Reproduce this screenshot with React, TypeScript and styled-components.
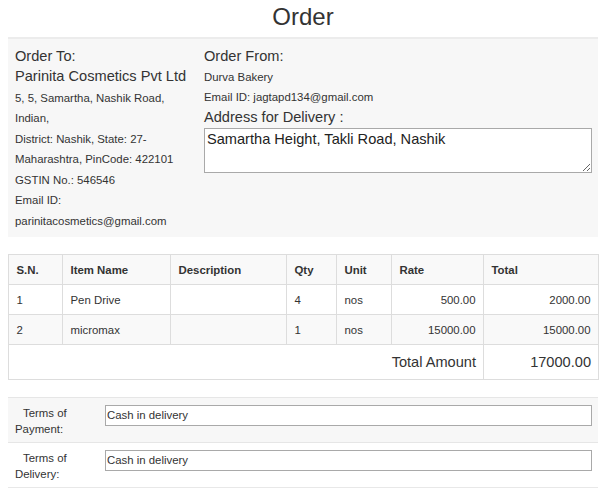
import React from "react";
import styled, { createGlobalStyle } from "styled-components";

const GlobalStyle = createGlobalStyle`
  html, body {
    margin: 0;
    padding: 0;
    background: #ffffff;
  }
  body {
    font-family: "Liberation Sans", Arial, sans-serif;
    color: #333333;
    font-size: 11.4px;
  }
  * { box-sizing: border-box; }
`;

const Page = styled.div`
  width: 590px;
  margin-left: 8px;
`;

const Title = styled.h2`
  margin: 0 0 4px;
  font-size: 24px;
  line-height: 33px;
  font-weight: normal;
  text-align: center;
  color: #333;
`;

const InfoBox = styled.section`
  display: grid;
  grid-template-columns: 189px 1fr;
  background: #f7f7f7;
  border-top: 2px solid #ececec;
  padding: 7px 0 5px;
  height: 200px;
`;

const Column = styled.div`
  padding: 0 6px 0 7px;
  display: flex;
  flex-direction: column;
`;

const Heading = styled.div<{ $lh?: number }>`
  font-size: 14.6px;
  line-height: ${(p) => p.$lh ?? 20}px;
  color: #333;
`;

const Lines = styled.div<{ $top?: number }>`
  margin-top: ${(p) => p.$top ?? 0}px;
  font-size: 11.4px;
  line-height: 20.6px;
  color: #333;
`;

const AddressField = styled.textarea`
  margin-top: 2.6px;
  width: 388px;
  height: 45px;
  border: 1px solid #a9a9a9;
  padding: 2px;
  font-family: "Liberation Sans", Arial, sans-serif;
  font-size: 14.6px;
  color: #222;
  background: #fff;
  resize: both;
  outline: none;
`;

const ItemsTable = styled.table`
  margin-top: 17px;
  width: 590px;
  border-collapse: collapse;
  table-layout: fixed;
  font-size: 11.4px;
  color: #333;
`;

const Th = styled.th`
  border: 1px solid #dddddd;
  padding: 6.5px 7.5px;
  line-height: 16px;
  text-align: left;
  font-weight: bold;
  color: #333;
  background: #f9f9f9;
`;

const BodyRow = styled.tr<{ $striped?: boolean }>`
  background: ${(p) => (p.$striped ? "#f9f9f9" : "#ffffff")};
`;

const Td = styled.td<{ $right?: boolean }>`
  border: 1px solid #dddddd;
  padding: 6.5px 7.5px;
  line-height: 16px;
  color: #333;
  text-align: ${(p) => (p.$right ? "right" : "left")};
  white-space: nowrap;
`;

const TotalCell = styled.td`
  border: 1px solid #dddddd;
  padding: 8.5px 7px;
  line-height: 17px;
  font-size: 14.6px;
  color: #333;
  text-align: right;
  background: #fff;
`;

const TermsList = styled.section`
  margin-top: 17px;
  border-bottom: 1px solid #e8e8e8;
`;

const TermsRow = styled.div<{ $shaded?: boolean }>`
  display: flex;
  align-items: flex-start;
  border-top: 1px solid #e6e6e6;
  background: ${(p) => (p.$shaded ? "#f7f7f7" : "#ffffff")};
  padding: 6.5px 6px 5.5px 0;
`;

const TermsLabel = styled.label`
  flex: 0 0 97px;
  padding-left: 7px;
  font-size: 11.4px;
  line-height: 16px;
  text-indent: 8px;
  color: #333;
`;

const TermsInput = styled.input`
  flex: 1;
  height: 21px;
  border: 1px solid #a9a9a9;
  padding: 0 1px;
  font-family: "Liberation Sans", Arial, sans-serif;
  font-size: 11.4px;
  color: #333;
  background: #fff;
  outline: none;
`;

const items = [
  { sn: "1", name: "Pen Drive", desc: "", qty: "4", unit: "nos", rate: "500.00", total: "2000.00" },
  { sn: "2", name: "micromax", desc: "", qty: "1", unit: "nos", rate: "15000.00", total: "15000.00" },
];

const colWidths = [54, 108, 116, 50, 55, 92, 115];

export default function App() {
  return (
    <>
      <GlobalStyle />
      <Page>
        <Title>Order</Title>
        <InfoBox>
          <Column>
            <Heading>Order To:</Heading>
            <Heading>Parinita Cosmetics Pvt Ltd</Heading>
            <Lines $top={1.5}>
              5, 5, Samartha, Nashik Road, Indian,
              <br />
              District: Nashik, State: 27-Maharashtra, PinCode: 422101
              <br />
              GSTIN No.: 546546
              <br />
              Email ID: parinitacosmetics@gmail.com
            </Lines>
          </Column>
          <Column>
            <Heading>Order From:</Heading>
            <Lines $top={0.5}>
              Durva Bakery
              <br />
              Email ID: jagtapd134@gmail.com
            </Lines>
            <Heading $lh={18}>Address for Delivery :</Heading>
            <AddressField defaultValue="Samartha Height, Takli Road, Nashik" />
          </Column>
        </InfoBox>

        <ItemsTable>
          <colgroup>
            {colWidths.map((w, i) => (
              <col key={i} style={{ width: w }} />
            ))}
          </colgroup>
          <thead>
            <tr>
              <Th>S.N.</Th>
              <Th>Item Name</Th>
              <Th>Description</Th>
              <Th>Qty</Th>
              <Th>Unit</Th>
              <Th>Rate</Th>
              <Th>Total</Th>
            </tr>
          </thead>
          <tbody>
            {items.map((it, i) => (
              <BodyRow key={it.sn} $striped={i % 2 === 1}>
                <Td>{it.sn}</Td>
                <Td>{it.name}</Td>
                <Td>{it.desc}</Td>
                <Td>{it.qty}</Td>
                <Td>{it.unit}</Td>
                <Td $right>{it.rate}</Td>
                <Td $right>{it.total}</Td>
              </BodyRow>
            ))}
            <tr>
              <TotalCell colSpan={6}>Total Amount</TotalCell>
              <TotalCell>17000.00</TotalCell>
            </tr>
          </tbody>
        </ItemsTable>

        <TermsList>
          <TermsRow $shaded>
            <TermsLabel>Terms of Payment:</TermsLabel>
            <TermsInput defaultValue="Cash in delivery" />
          </TermsRow>
          <TermsRow>
            <TermsLabel>Terms of Delivery:</TermsLabel>
            <TermsInput defaultValue="Cash in delivery" />
          </TermsRow>
        </TermsList>
      </Page>
    </>
  );
}
